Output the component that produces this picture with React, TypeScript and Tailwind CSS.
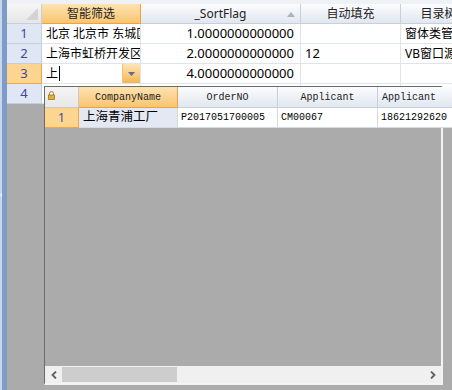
import React from 'react';

const sans = "font-['Noto_Sans','Noto_Sans_CJK_SC',sans-serif]";
const mono = "font-['Liberation_Mono','Noto_Sans_CJK_SC',monospace]";

const hdr = 'h-full flex items-center justify-center shrink-0 border-r border-b border-[#c5cfdd] bg-linear-to-b from-[#fbfcfe] to-[#e1e7ef] text-[#222]';
const hdrSel = 'h-full flex items-center justify-center shrink-0 border-r border-b border-[#f0a23c] bg-linear-to-b from-[#fce3b0] to-[#f8c571] text-[#222]';
const rowHdr = 'h-full w-[35px] shrink-0 flex items-center justify-center border-r border-b border-[#c3cee0] bg-[#dfe7f4] text-[#45459a] text-[13px]';
const rowHdrSel = 'h-full w-[35px] shrink-0 flex items-center justify-center border-r border-b border-[#f3a640] bg-[#fcd590] text-[#45459a] text-[13px]';
const cell = 'h-full shrink-0 flex items-center px-[4px] border-r border-b border-[#dfe3ea] bg-white overflow-hidden whitespace-nowrap text-[12px] text-black';

const rows = [
  { n: '1', a: '北京 北京市 东城区王府井', b: '1.0000000000000', c: '', d: '窗体类管理' },
  { n: '2', a: '上海市虹桥开发区', b: '2.0000000000000', c: '12', d: 'VB窗口源码' },
];

const Lock = () => (
  <svg width="7" height="9" viewBox="0 0 7 9">
    <path d="M1.5 4V2.6a2 2 0 0 1 4 0V4" fill="none" stroke="#a08040" strokeWidth="1" />
    <rect x="0.5" y="4" width="6" height="4.5" fill="#e2b030" stroke="#a07820" strokeWidth="0.8" />
  </svg>
);

const App: React.FC = () => {
  return (
    <div className={`relative w-[452px] h-[390px] overflow-hidden flex bg-[#ababab] ${sans}`}>
      {/* left dock strip */}
      <div className="w-[7px] h-full flex shrink-0">
        <div className="w-[2px] h-full bg-[#c9d7ea] flex items-center">
          <svg width="7" height="16" viewBox="0 0 7 16" className="shrink-0">
            <path d="M6 1 1 8l5 7" fill="none" stroke="#f4f7fb" strokeWidth="1.2" />
          </svg>
        </div>
        <div className="w-[5px] h-full bg-[#7f9bc7]" />
      </div>

      <div className="flex-1 flex flex-col">
        <div className="h-[4px] bg-[#eef1f5]" />
        {/* header row */}
        <div className="h-[20px] flex text-[12px]">
          <div className="relative w-[35px] h-full shrink-0 border-r border-b border-[#c5cfdd] bg-linear-to-b from-[#f6f6f6] to-[#e6e6e6]">
            <svg width="12" height="12" viewBox="0 0 12 12" className="absolute right-[3px] bottom-[3px]">
              <path d="M12 0V12H0Z" fill="#d3d3d3" />
            </svg>
          </div>
          <div className={`${hdrSel} w-[99px]`}>智能筛选</div>
          <div className={`${hdr} w-[160px] relative`}>
            <span className="text-[12px]">_SortFlag</span>
            <svg width="8" height="5" viewBox="0 0 8 5" className="absolute right-[5px] top-[8px]">
              <path d="M4 0 8 5H0Z" fill="#a9b3c4" />
            </svg>
          </div>
          <div className={`${hdr} w-[100px]`}>自动填充</div>
          <div className={`${hdr} w-[100px]`}>目录树结构</div>
        </div>

        {rows.map((r) => (
          <div key={r.n} className="h-[20px] flex">
            <div className={rowHdr}>{r.n}</div>
            <div className={`${cell} w-[99px]`}>{r.a}</div>
            <div className={`${cell} w-[160px] justify-end text-[13px] pr-[6px]`}>{r.b}</div>
            <div className={`${cell} w-[100px] text-[13px]`}>{r.c}</div>
            <div className={`${cell} w-[100px]`}>{r.d}</div>
          </div>
        ))}

        {/* editing row */}
        <div className="h-[20px] flex">
          <div className={rowHdrSel}>3</div>
          <div className={`${cell} w-[99px] pr-0 justify-between`}>
            <span className="flex items-center">
              上<span className="w-px h-[15px] bg-black ml-[1px]" />
            </span>
            <div className="w-[18px] h-[19px] flex items-center justify-center bg-linear-to-b from-[#fde6b4] to-[#f6b54e] border-l border-[#f2c27c]">
              <svg width="7" height="4" viewBox="0 0 7 4">
                <path d="M0 0H7L3.5 4Z" fill="#5a6e96" />
              </svg>
            </div>
          </div>
          <div className={`${cell} w-[160px] justify-end text-[13px] pr-[6px]`}>4.0000000000000</div>
          <div className={`${cell} w-[100px]`} />
          <div className={`${cell} w-[100px]`} />
        </div>

        <div className="h-[20px] flex">
          <div className={rowHdr}>4</div>
          <div className={`${cell} w-[99px]`} />
          <div className={`${cell} w-[160px]`} />
          <div className={`${cell} w-[100px]`} />
          <div className={`${cell} w-[100px]`} />
        </div>
      </div>

      {/* dropdown popup */}
      <div className="absolute left-[44px] top-[86px] w-[399px] h-[299px] flex flex-col border-l border-t border-[#6b6b6b] border-r-2 border-b-2 border-r-[#f4f4f4] border-b-[#f4f4f4] bg-[#ababab]">
        <div className={`h-[21px] flex text-[10px] ${mono}`}>
          <div className="w-[34px] h-full shrink-0 flex items-start pt-[4px] pl-[3px] border-r border-b border-[#c8c8c8] bg-linear-to-b from-[#f4f4f4] to-[#e8e8e8]">
            <Lock />
          </div>
          <div className={`${hdrSel} w-[99px]`}>CompanyName</div>
          <div className={`${hdr} w-[100px]`}>OrderNO</div>
          <div className={`${hdr} w-[100px]`}>Applicant</div>
          <div className={`${hdr} w-[100px] justify-start pl-[4px]`}>Applicant</div>
        </div>
        <div className="h-[20px] flex">
          <div className="h-full w-[34px] shrink-0 flex items-center justify-center border-r border-b border-[#f3a640] bg-[#fcd590] text-[#45459a] text-[12px]">1</div>
          <div className="h-full w-[99px] shrink-0 flex items-center px-[4px] border-r border-b border-[#d5dbe6] bg-[#e4e8f3] text-[12.5px] text-black whitespace-nowrap">上海青浦工厂</div>
          <div className={`h-full w-[100px] shrink-0 flex items-center px-[3px] border-r border-b border-[#d5dbe6] bg-white text-[10px] ${mono}`}>P2017051700005</div>
          <div className={`h-full w-[100px] shrink-0 flex items-center px-[3px] border-r border-b border-[#d5dbe6] bg-white text-[10px] ${mono}`}>CM00067</div>
          <div className={`h-full w-[100px] shrink-0 flex items-center px-[3px] border-b border-[#d5dbe6] bg-white text-[10px] overflow-hidden whitespace-nowrap ${mono}`}>18621292620</div>
        </div>
        <div className="flex-1" />
        <div className="h-[17px] flex items-center bg-[#f0f0f0]">
          <div className="w-[17px] h-full flex items-center justify-center">
            <svg width="6" height="8" viewBox="0 0 6 8">
              <path d="M5 0.5 1.5 4 5 7.5" fill="none" stroke="#606060" strokeWidth="1.8" />
            </svg>
          </div>
          <div className="w-[115px] h-[15px] bg-[#cdcdcd]" />
          <div className="flex-1" />
          <div className="w-[17px] h-full flex items-center justify-center">
            <svg width="6" height="8" viewBox="0 0 6 8">
              <path d="M1 0.5 4.5 4 1 7.5" fill="none" stroke="#606060" strokeWidth="1.8" />
            </svg>
          </div>
        </div>
      </div>
    </div>
  );
};

export default App;
